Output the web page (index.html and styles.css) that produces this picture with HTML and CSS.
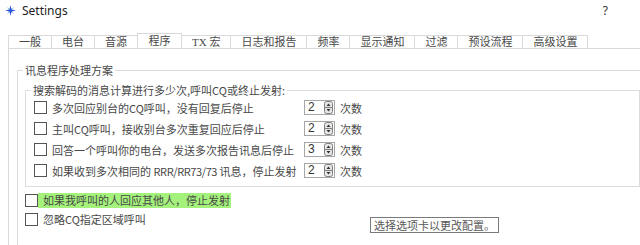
FILE: index.html
```html
<!DOCTYPE html>
<html lang="zh-CN">
<head>
<meta charset="utf-8">
<title>Settings</title>
<link rel="stylesheet" href="styles.css">
</head>
<body>
<div class="window">
  <header class="titlebar">
    <svg class="app-icon" width="11" height="11" viewBox="0 0 11 11" aria-hidden="true">
      <path d="M2 2 L5.5 4.6 L9 2 L6.4 5.5 L9 9 L5.5 6.4 L2 9 L4.6 5.5Z" fill="#7d9bf2"/>
      <path d="M5.5 0 L6.5 4.5 L11 5.5 L6.5 6.5 L5.5 11 L4.5 6.5 L0 5.5 L4.5 4.5Z" fill="#2a55d6"/>
    </svg>
    <span class="title">Settings</span>
    <span class="help">?</span>
  </header>

  <nav class="tabs">
    <div class="tab">一般</div>
    <div class="tab">电台</div>
    <div class="tab">音源</div>
    <div class="tab active">程序</div>
    <div class="tab">TX 宏</div>
    <div class="tab">日志和报告</div>
    <div class="tab">频率</div>
    <div class="tab">显示通知</div>
    <div class="tab">过滤</div>
    <div class="tab">预设流程</div>
    <div class="tab">高级设置</div>
  </nav>

  <section class="pane">
    <fieldset class="group outer">
      <legend>讯息程序处理方案</legend>
      <fieldset class="group inner">
        <legend>搜索解码的消息计算进行多少次,呼叫CQ或终止发射:</legend>
        <div class="rows">
          <label class="check"><input type="checkbox" class="cb"><span>多次回应别台的CQ呼叫，没有回复后停止</span></label>
          <span class="spin"><span class="spin-val">2</span><svg class="spin-btn" width="9" height="13" viewBox="0 0 9 13"><rect x="0.5" y="0.5" width="8" height="12" rx="2" fill="#e6e6e6" stroke="#808080"/><line x1="1" y1="6.5" x2="8" y2="6.5" stroke="#808080"/><path d="M2.5 5 L4.5 2.5 L6.5 5Z" fill="#333"/><path d="M2.5 8 L4.5 10.5 L6.5 8Z" fill="#333"/></svg></span>
          <span class="unit">次数</span>

          <label class="check"><input type="checkbox" class="cb"><span>主叫CQ呼叫，接收别台多次重复回应后停止</span></label>
          <span class="spin"><span class="spin-val">2</span><svg class="spin-btn" width="9" height="13" viewBox="0 0 9 13"><rect x="0.5" y="0.5" width="8" height="12" rx="2" fill="#e6e6e6" stroke="#808080"/><line x1="1" y1="6.5" x2="8" y2="6.5" stroke="#808080"/><path d="M2.5 5 L4.5 2.5 L6.5 5Z" fill="#333"/><path d="M2.5 8 L4.5 10.5 L6.5 8Z" fill="#333"/></svg></span>
          <span class="unit">次数</span>

          <label class="check"><input type="checkbox" class="cb"><span>回答一个呼叫你的电台，发送多次报告讯息后停止</span></label>
          <span class="spin"><span class="spin-val">3</span><svg class="spin-btn" width="9" height="13" viewBox="0 0 9 13"><rect x="0.5" y="0.5" width="8" height="12" rx="2" fill="#e6e6e6" stroke="#808080"/><line x1="1" y1="6.5" x2="8" y2="6.5" stroke="#808080"/><path d="M2.5 5 L4.5 2.5 L6.5 5Z" fill="#333"/><path d="M2.5 8 L4.5 10.5 L6.5 8Z" fill="#333"/></svg></span>
          <span class="unit">次数</span>

          <label class="check"><input type="checkbox" class="cb"><span>如果收到多次相同的 <span class="latin">RRR/RR73/73</span> 讯息，停止发射</span></label>
          <span class="spin"><span class="spin-val">2</span><svg class="spin-btn" width="9" height="13" viewBox="0 0 9 13"><rect x="0.5" y="0.5" width="8" height="12" rx="2" fill="#e6e6e6" stroke="#808080"/><line x1="1" y1="6.5" x2="8" y2="6.5" stroke="#808080"/><path d="M2.5 5 L4.5 2.5 L6.5 5Z" fill="#333"/><path d="M2.5 8 L4.5 10.5 L6.5 8Z" fill="#333"/></svg></span>
          <span class="unit">次数</span>
        </div>
      </fieldset>

      <div class="options">
        <label class="option"><input type="checkbox" class="cb"><span class="opt-text highlight">如果我呼叫的人回应其他人，停止发射</span></label>
        <label class="option"><input type="checkbox" class="cb"><span class="opt-text">忽略CQ指定区域呼叫</span></label>
      </div>
    </fieldset>
  </section>

  <div class="tooltip">选择选项卡以更改配置。</div>
</div>
</body>
</html>
```

FILE: styles.css
```css
html, body {
  margin: 0;
  padding: 0;
}

body {
  width: 640px;
  height: 245px;
  overflow: hidden;
  background: #ffffff;
  font-family: "Noto Sans CJK SC", sans-serif;
  font-size: 11px;
  color: #484848;
}

.window {
  position: relative;
  width: 640px;
  height: 245px;
  overflow: hidden;
}

/* title bar */
.titlebar {
  display: flex;
  align-items: center;
  height: 21px;
  padding: 0 32px 0 5px;
  font-family: "Noto Sans", sans-serif;
  font-size: 12px;
  color: #1e1e1e;
}

.app-icon {
  margin-right: 6px;
  flex: none;
}

.help {
  margin-left: auto;
  color: #333333;
}

/* tabs */
.tabs {
  display: flex;
  align-items: flex-end;
  height: 15px;
  margin: 12px 0 0 8px;
}

.tab {
  box-sizing: border-box;
  height: 13px;
  line-height: 12px;
  padding: 0 10px;
  border-top: 1px solid #d9d9d9;
  border-left: 1px solid #d9d9d9;
  font-family: "Liberation Serif", "Noto Sans CJK SC", serif;
  white-space: nowrap;
  color: #484848;
}

.tab:last-child {
  border-right: 1px solid #d9d9d9;
}

.tab.active {
  height: 15px;
  line-height: 14px;
  padding: 0 10.5px;
  border-right: 1px solid #d9d9d9;
  margin-right: -1px;
  position: relative;
}

/* pane */
.pane {
  width: 700px;
  height: 300px;
  margin-left: 8px;
  padding: 14px 0 0 8px;
  border-top: 1px solid #d9d9d9;
  border-left: 1px solid #d9d9d9;
}

.group {
  margin: 0;
  min-width: 0;
  border: 1px solid #dcdcdc;
}

.group > legend {
  padding: 0 2px;
  line-height: 14px;
}

.outer {
  padding: 6px 0 0 7px;
  height: 260px;
}

.outer > legend {
  margin-left: -2px;
}

.inner {
  box-sizing: border-box;
  width: 615px;
  padding: 0 0 5px 8px;
}

.inner > legend {
  margin-left: -3px;
}

.rows {
  display: grid;
  grid-template-columns: 270px 31px auto;
  grid-auto-rows: 21px;
  align-items: center;
}

.check {
  display: flex;
  align-items: center;
  white-space: nowrap;
}

.latin {
  letter-spacing: -0.4px;
}

.cb {
  appearance: none;
  -webkit-appearance: none;
  box-sizing: border-box;
  width: 13px;
  height: 13px;
  margin: 0 5px 0 0;
  border: 1px solid #555555;
  background: #ffffff;
  flex: none;
}

.spin {
  box-sizing: border-box;
  display: flex;
  align-items: center;
  width: 31px;
  height: 15px;
  border: 1px solid #a6a6a6;
  background: #ffffff;
}

.spin-val {
  flex: 1;
  padding-left: 3px;
  line-height: 13px;
  font-family: "Liberation Sans", sans-serif;
  font-size: 12px;
  color: #333333;
}

.spin-btn {
  flex: none;
  margin-right: 1px;
}

.unit {
  margin-left: 5px;
}

/* lower options */
.options {
  padding-top: 4px;
}

.option {
  display: flex;
  align-items: center;
  height: 19px;
  white-space: nowrap;
}

.option .cb {
  margin-right: 0;
}

.opt-text {
  line-height: 15px;
  padding: 0 1px 0 5px;
}

.highlight {
  background: #a4f27c;
}

/* tooltip overlay */
.tooltip {
  position: absolute;
  left: 370px;
  top: 217px;
  padding: 0 3px;
  line-height: 14px;
  border: 1px solid #7a7a7a;
  background: #ffffff;
  color: #575757;
  font-size: 11px;
  white-space: nowrap;
}
```
